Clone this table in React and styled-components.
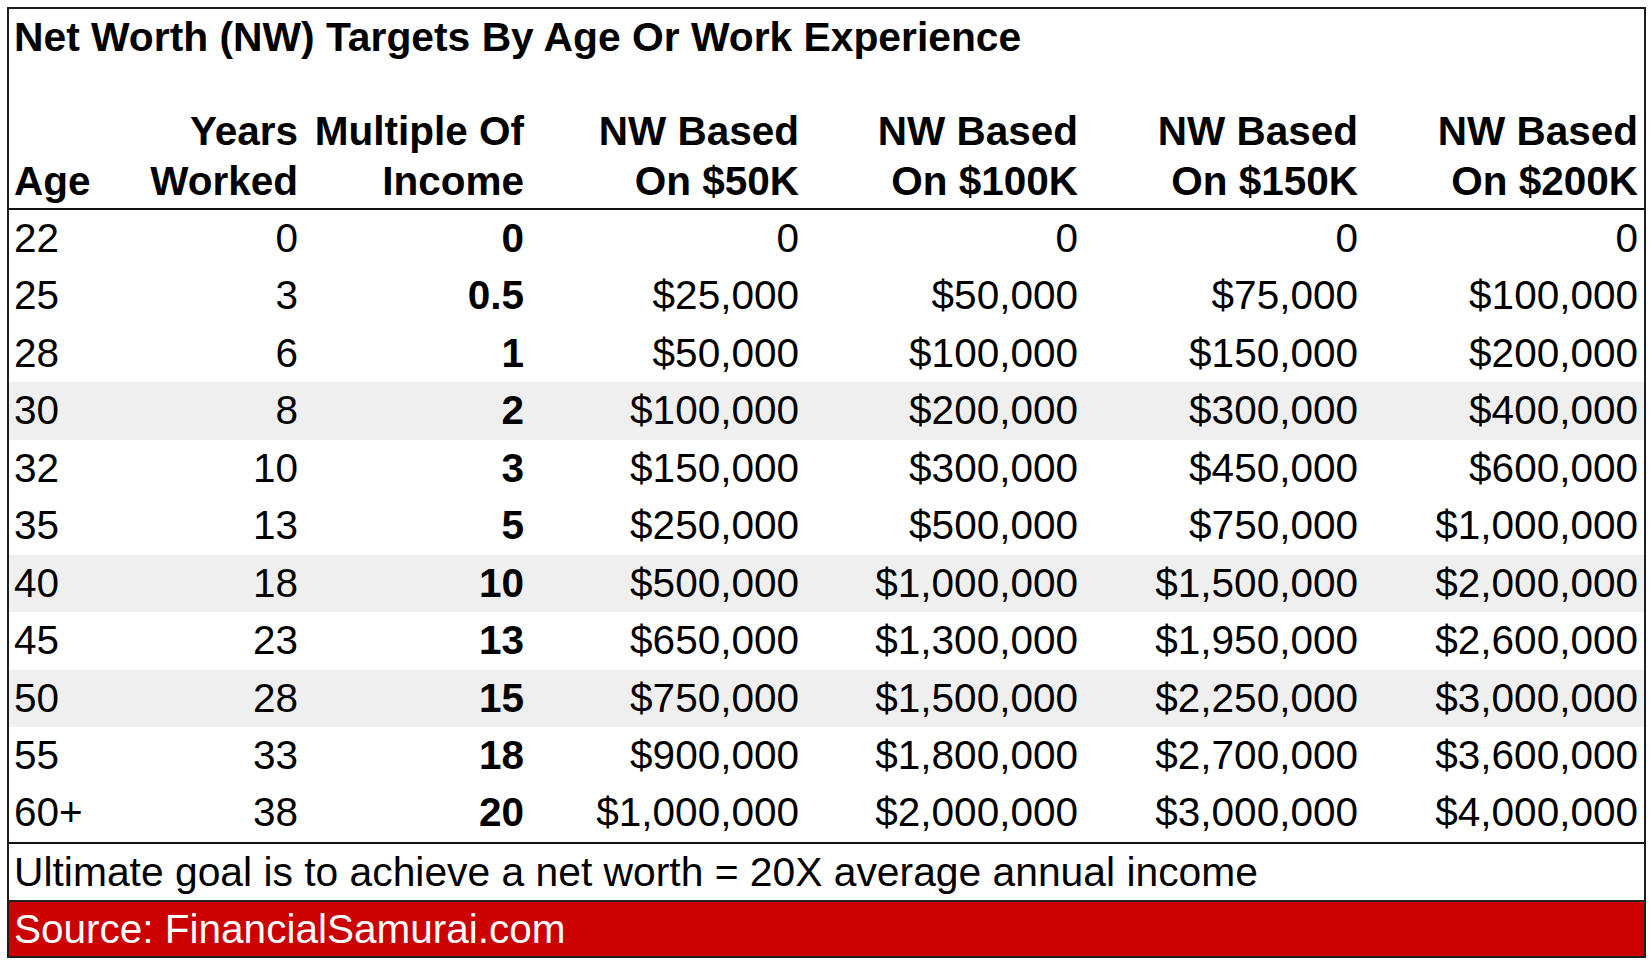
import React from "react";
import styled, { createGlobalStyle } from "styled-components";

const COLS = "108px 187px 226px 275px 279px 280px 280px";

const rows = [
  ["22", "0", "0", "0", "0", "0", "0"],
  ["25", "3", "0.5", "$25,000", "$50,000", "$75,000", "$100,000"],
  ["28", "6", "1", "$50,000", "$100,000", "$150,000", "$200,000"],
  ["30", "8", "2", "$100,000", "$200,000", "$300,000", "$400,000"],
  ["32", "10", "3", "$150,000", "$300,000", "$450,000", "$600,000"],
  ["35", "13", "5", "$250,000", "$500,000", "$750,000", "$1,000,000"],
  ["40", "18", "10", "$500,000", "$1,000,000", "$1,500,000", "$2,000,000"],
  ["45", "23", "13", "$650,000", "$1,300,000", "$1,950,000", "$2,600,000"],
  ["50", "28", "15", "$750,000", "$1,500,000", "$2,250,000", "$3,000,000"],
  ["55", "33", "18", "$900,000", "$1,800,000", "$2,700,000", "$3,600,000"],
  ["60+", "38", "20", "$1,000,000", "$2,000,000", "$3,000,000", "$4,000,000"],
];

const shaded = ["30", "40", "50"];

const headers = [
  ["", "Age"],
  ["Years", "Worked"],
  ["Multiple Of", "Income"],
  ["NW Based", "On $50K"],
  ["NW Based", "On $100K"],
  ["NW Based", "On $150K"],
  ["NW Based", "On $200K"],
];

const GlobalStyle = createGlobalStyle`
  html, body {
    margin: 0;
    background: #ffffff;
  }
  body {
    font-family: "Liberation Sans", Arial, sans-serif;
    color: #000000;
  }
`;

const Page = styled.div`
  width: 1652px;
  height: 964px;
  box-sizing: border-box;
  padding: 7px 0 0 7px;
  overflow: hidden;
`;

const Sheet = styled.div`
  width: 1639px;
  box-sizing: border-box;
  border: 2px solid #1e1e1e;
  font-size: 40.5px;
`;

const Title = styled.div`
  height: 57px;
  line-height: 57px;
  padding-left: 5px;
  font-size: 40.8px;
  font-weight: bold;
  white-space: nowrap;
`;

const HeaderRow = styled.div`
  display: grid;
  grid-template-columns: ${COLS};
  height: 142px;
  border-bottom: 2px solid #111;
`;

const HeadCell = styled.div`
  align-self: end;
  padding: 0 6px 2px 5px;
  line-height: 50px;
  font-weight: bold;
  text-align: ${(p) => (p.$left ? "left" : "right")};
  white-space: nowrap;
`;

const DataRow = styled.div`
  display: grid;
  grid-template-columns: ${COLS};
  height: 57.45px;
  line-height: 57.45px;
  background: ${(p) => (p.$shade ? "#efefef" : "transparent")};
`;

const Cell = styled.div`
  padding: 0 6px 0 5px;
  text-align: ${(p) => (p.$left ? "left" : "right")};
  font-weight: ${(p) => (p.$bold ? "bold" : "normal")};
  white-space: nowrap;
`;

const Note = styled.div`
  height: 56px;
  line-height: 56px;
  padding-left: 5px;
  border-top: 2px solid #111;
  font-size: 40.8px;
  white-space: nowrap;
`;

const Source = styled.div`
  height: 54px;
  line-height: 54px;
  padding-left: 5px;
  border-top: 2px solid #222;
  background: #cc0000;
  color: #ffffff;
  white-space: nowrap;
`;

const App = () => {
  return (
    <>
      <GlobalStyle />
      <Page>
        <Sheet>
          <Title>Net Worth (NW) Targets By Age Or Work Experience</Title>
          <HeaderRow>
            {headers.map(([top, bottom], i) => (
              <HeadCell key={i} $left={i === 0}>
                {top && (
                  <>
                    {top}
                    <br />
                  </>
                )}
                {bottom}
              </HeadCell>
            ))}
          </HeaderRow>
          {rows.map((row) => (
            <DataRow key={row[0]} $shade={shaded.includes(row[0])}>
              {row.map((value, i) => (
                <Cell key={i} $left={i === 0} $bold={i === 2}>
                  {value}
                </Cell>
              ))}
            </DataRow>
          ))}
          <Note>Ultimate goal is to achieve a net worth = 20X average annual income</Note>
          <Source>Source: FinancialSamurai.com</Source>
        </Sheet>
      </Page>
    </>
  );
};

export default App;
